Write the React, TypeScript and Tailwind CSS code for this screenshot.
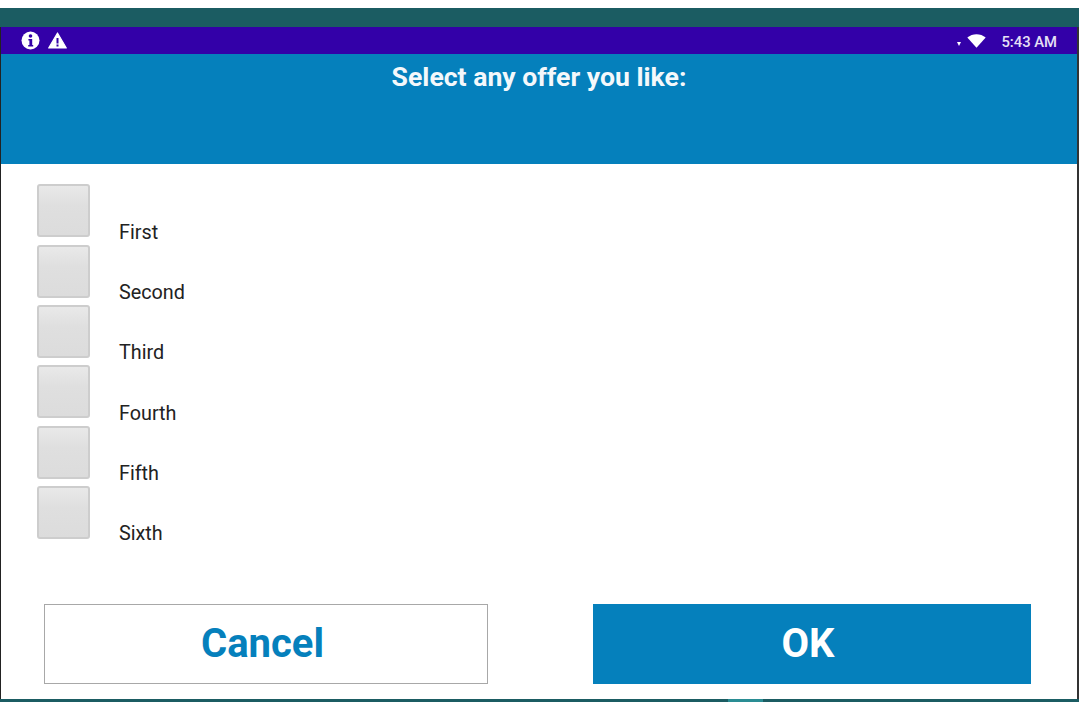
const offers = ["First", "Second", "Third", "Fourth", "Fifth", "Sixth"];

function InfoIcon() {
  return (
    <svg width="19" height="19" viewBox="0 0 19 19">
      <circle cx="9.5" cy="9.5" r="9" fill="#fff" />
      <circle cx="9.5" cy="5" r="1.8" fill="#3300a8" />
      <path d="M7.4 8h3.8v6h1v1.6H7.2V14h1.2V9.6h-1z" fill="#3300a8" />
    </svg>
  );
}

function WarningIcon() {
  return (
    <svg width="19" height="17" viewBox="0 0 19 17">
      <path d="M9.5 1 18.3 16H.7z" fill="#fff" stroke="#fff" strokeWidth="1.2" strokeLinejoin="round" />
      <path d="M8.5 6h2v5.5h-2zM8.5 12.4h2v2h-2z" fill="#3300a8" />
    </svg>
  );
}

function WifiIcon() {
  return (
    <svg width="19" height="14" viewBox="0 0 19 14">
      <path d="M0.3 3.6C5.5-0.9 13.5-0.9 18.7 3.6L9.5 13.8z" fill="#fff" />
    </svg>
  );
}

function StatusBar() {
  return (
    <div className="flex h-[27px] items-center bg-[#3300a8] pl-[20px] pr-[20px]">
      <div className="flex items-center gap-[8px]">
        <InfoIcon />
        <WarningIcon />
      </div>
      <div className="ml-auto flex items-center">
        <span className="mt-[6px] mr-[6px] h-0 w-0 border-x-[2.5px] border-t-[4px] border-x-transparent border-t-white" />
        <WifiIcon />
        <span className="mt-[2px] ml-[15px] text-[14.8px] leading-[20px] font-medium text-[#e6e0f5]">5:43 AM</span>
      </div>
    </div>
  );
}

function OfferRow({ label }: { label: string }) {
  return (
    <div className="flex h-[60.3px] shrink-0 items-start">
      <div className="h-[53px] w-[53px] rounded-[3px] border-2 border-[#cdcdcd] bg-gradient-to-b from-[#e9e9e9] via-[#dfdfdf] via-40% to-[#dcdcdc]" />
      <span className="ml-[29px] mt-[36.4px] text-[19.8px] leading-[24px] text-[#222]">{label}</span>
    </div>
  );
}

export default function App() {
  return (
    <div className="flex h-[702px] w-[1079px] flex-col overflow-hidden bg-white font-['Roboto',sans-serif]">
      <div className="h-[8px] shrink-0 bg-white" />
      <div className="h-[19px] shrink-0 bg-[#1b5c62]" />
      <div className="flex min-h-0 flex-1 flex-col border-l border-r-2 border-l-[#222] border-r-[#333]">
        <StatusBar />
        <div className="h-[110px] shrink-0 bg-[#0580bc] pt-[7px] text-center text-[26.6px] leading-[32px] font-bold text-[#f4f8fb]">
          Select any offer you like:
        </div>
        <div className="flex flex-1 flex-col bg-white pl-[36px] pt-[20.4px]">
          {offers.map((offer) => (
            <OfferRow key={offer} label={offer} />
          ))}
          <div className="mt-[57.6px] flex pl-[7px]">
            <button className="h-[80px] w-[444px] border border-[#a8a8a8] bg-white pr-[7px] text-[40px] font-bold text-[#0580bc]">
              Cancel
            </button>
            <button className="ml-[105px] h-[80px] w-[438px] bg-[#0580bc] pr-[8px] text-[40px] font-bold text-white">
              OK
            </button>
          </div>
        </div>
      </div>
      <div className="h-[3px] shrink-0 bg-[#1b5c62] pl-[728px]">
        <div className="h-full w-[35px] bg-[#2a8d94]" />
      </div>
    </div>
  );
}
